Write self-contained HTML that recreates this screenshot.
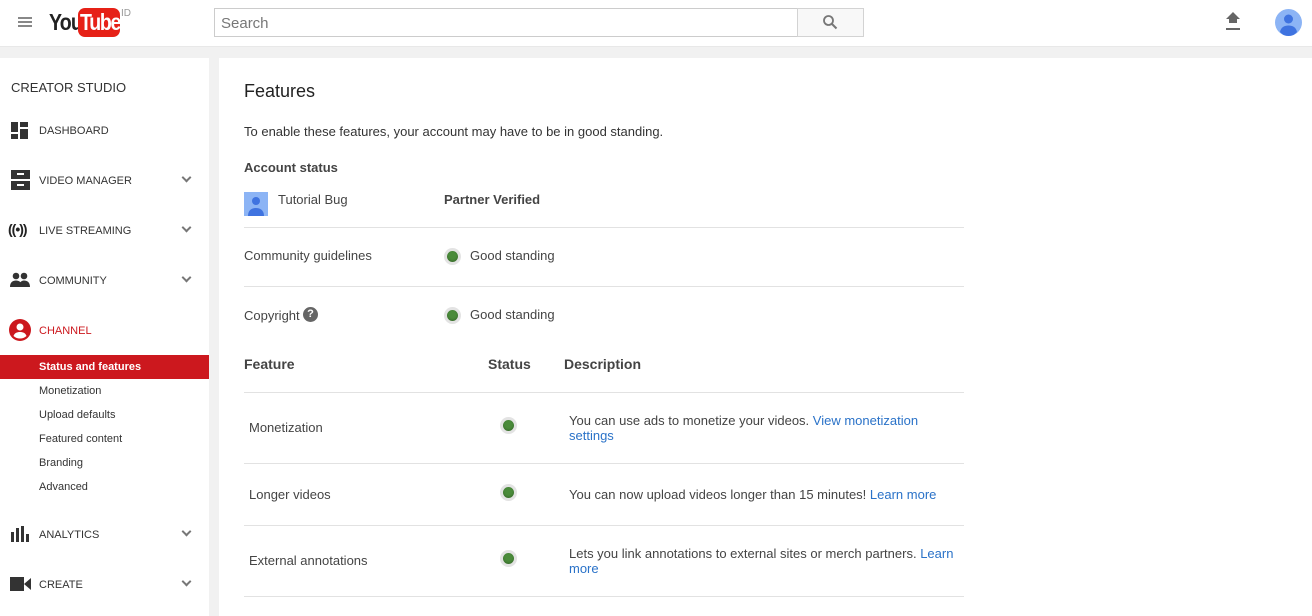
<!DOCTYPE html>
<html><head><style>
*{margin:0;padding:0;box-sizing:border-box}
body{width:1312px;height:616px;overflow:hidden;font-family:"Liberation Sans",Arial,sans-serif;background:#f1f1f1;position:relative;color:#333}
.a{position:absolute;white-space:nowrap}
#hdr{position:absolute;left:0;top:0;width:1312px;height:47px;background:#fff;border-bottom:1px solid #e8e8e8}
#side{position:absolute;left:0;top:58px;width:209px;height:558px;background:#fff}
#main{position:absolute;left:219px;top:58px;width:1093px;height:558px;background:#fff}
.nav{font-size:11px;color:#333;left:39px}
.sub{font-size:11px;color:#333;left:39px}
.chev{left:183px;width:7px;height:7px;border-right:2px solid #777;border-bottom:2px solid #777;transform:rotate(45deg)}
.m{font-size:13px;color:#444}
.hr{position:absolute;left:244px;width:720px;height:1px;background:#e2e2e2}
.dot{position:absolute;width:17px;height:17px;border-radius:50%;background:#4a8b3a;border:3px solid #e3e3e3;box-shadow:inset 0 -1px 2px rgba(0,0,0,.25)}
.lk{color:#2a72c8}
</style></head><body>
<div id="hdr"></div>
<div class="a" style="left:18px;top:17px;width:14px;height:2px;background:#888;box-shadow:0 4px 0 #888,0 8px 0 #888"></div>
<div class="a" style="left:49px;top:9px;font-size:23px;font-weight:bold;letter-spacing:-1px;color:#222;transform:scaleX(.85);transform-origin:left">You</div>
<div class="a" style="left:78px;top:8px;width:42px;height:29px;background:#e62117;border-radius:7px"></div>
<div class="a" style="left:80px;top:9px;font-size:23px;font-weight:bold;letter-spacing:-1.5px;color:#fff;transform:scaleX(.85);transform-origin:left">Tube</div>
<div class="a" style="left:121px;top:8px;font-size:10px;color:#999">ID</div>
<div class="a" style="left:214px;top:8px;width:584px;height:29px;border:1px solid #ccc;background:#fff;font-size:15px;color:#777;padding:6px 6px">Search</div>
<div class="a" style="left:797px;top:8px;width:67px;height:29px;border:1px solid #d3d3d3;background:#f8f8f8"></div>
<svg class="a" style="left:822px;top:14px" width="16" height="16" viewBox="0 0 16 16"><circle cx="6.5" cy="6.5" r="4.5" fill="none" stroke="#777" stroke-width="1.8"/><path d="M10 10l4.5 4.5" stroke="#777" stroke-width="2"/></svg>
<svg class="a" style="left:1224px;top:12px" width="18" height="20" viewBox="0 0 18 20"><path d="M5 11V7H2l7-7 7 7h-3v4z" fill="#666"/><rect x="2" y="16" width="14" height="2" fill="#666"/></svg>
<svg class="a" style="left:1275px;top:9px" width="27" height="27" viewBox="0 0 27 27"><circle cx="13.5" cy="13.5" r="13.5" fill="#8cb4f5"/><circle cx="13.5" cy="10" r="4.5" fill="#3f73e0"/><path d="M5 23c1-5 4.5-6.5 8.5-6.5s7.5 1.5 8.5 6.5c-2 2.5-5 4-8.5 4s-6.5-1.5-8.5-4z" fill="#3f73e0"/></svg>

<div id="side"></div>
<div id="main"></div>
<div class="a" style="left:11px;top:80px;font-size:13px;color:#333">CREATOR STUDIO</div>
<svg class="a" style="left:11px;top:122px" width="17" height="17"><rect x="0" y="0" width="7" height="10" fill="#333"/><rect x="0" y="12" width="7" height="5" fill="#333"/><rect x="9" y="0" width="8" height="5" fill="#333"/><rect x="9" y="7" width="8" height="10" fill="#333"/></svg>
<div class="a nav" style="top:125px">DASHBOARD</div>
<svg class="a" style="left:11px;top:170px" width="19" height="20"><rect x="0" y="0" width="19" height="9" fill="#333"/><rect x="0" y="11" width="19" height="9" fill="#333"/><rect x="6" y="3" width="7" height="2" fill="#fff"/><rect x="6" y="14" width="7" height="2" fill="#fff"/></svg>
<div class="a nav" style="top:175px">VIDEO MANAGER</div><div class="a chev" style="top:174px"></div>
<div class="a" style="left:8px;top:221px;font-size:14px;font-weight:bold;color:#222;letter-spacing:-1px">((•))</div>
<div class="a nav" style="top:225px">LIVE STREAMING</div><div class="a chev" style="top:224px"></div>
<svg class="a" style="left:10px;top:272px" width="21" height="16"><circle cx="6" cy="4" r="3.3" fill="#333"/><circle cx="14" cy="4" r="3.3" fill="#333"/><path d="M0 15c0-5 3-6.5 6-6.5s6 1.5 6 6.5z M9 15c0-4 2-6.5 5-6.5s6 1.5 6 6.5z" fill="#333"/></svg>
<div class="a nav" style="top:275px">COMMUNITY</div><div class="a chev" style="top:274px"></div>
<svg class="a" style="left:9px;top:319px" width="22" height="22"><circle cx="11" cy="11" r="11" fill="#cc181e"/><circle cx="11" cy="8" r="3.5" fill="#fff"/><path d="M4.5 17c1-3 3.5-4 6.5-4s5.5 1 6.5 4c-1.5 1.5-4 2.5-6.5 2.5s-5-1-6.5-2.5z" fill="#fff"/></svg>
<div class="a nav" style="top:325px;color:#cc181e">CHANNEL</div>
<div class="a" style="left:0;top:355px;width:209px;height:24px;background:#cc181e"></div>
<div class="a sub" style="top:361px;color:#fff;font-weight:bold">Status and features</div>
<div class="a sub" style="top:385px">Monetization</div>
<div class="a sub" style="top:409px">Upload defaults</div>
<div class="a sub" style="top:433px">Featured content</div>
<div class="a sub" style="top:457px">Branding</div>
<div class="a sub" style="top:481px">Advanced</div>
<svg class="a" style="left:11px;top:526px" width="18" height="16"><rect x="0" y="6" width="3" height="10" fill="#333"/><rect x="5" y="2" width="3" height="14" fill="#333"/><rect x="10" y="0" width="3" height="16" fill="#333"/><rect x="15" y="8" width="3" height="8" fill="#333"/></svg>
<div class="a nav" style="top:529px">ANALYTICS</div><div class="a chev" style="top:528px"></div>
<svg class="a" style="left:10px;top:577px" width="21" height="14"><rect x="0" y="0" width="14" height="14" fill="#333"/><path d="M14 7l7-6v12z" fill="#333"/></svg>
<div class="a nav" style="top:579px">CREATE</div><div class="a chev" style="top:578px"></div>

<div class="a" style="left:244px;top:81px;font-size:18px;color:#222">Features</div>
<div class="a m" style="left:244px;top:124px;color:#333">To enable these features, your account may have to be in good standing.</div>
<div class="a" style="left:244px;top:160px;font-size:13px;font-weight:bold;color:#444">Account status</div>
<svg class="a" style="left:244px;top:192px" width="24" height="24"><rect width="24" height="24" fill="#8cb4f5"/><circle cx="12" cy="9" r="4" fill="#3f73e0"/><path d="M4 24c0-6 4-8 8-8s8 2 8 8z" fill="#3f73e0"/></svg>
<div class="a m" style="left:278px;top:192px">Tutorial Bug</div>
<div class="a" style="left:444px;top:192px;font-size:13px;font-weight:bold;color:#444">Partner Verified</div>
<div class="hr" style="top:227px"></div>
<div class="a m" style="left:244px;top:248px">Community guidelines</div>
<div class="dot" style="left:444px;top:248px"></div>
<div class="a m" style="left:470px;top:248px">Good standing</div>
<div class="hr" style="top:286px"></div>
<div class="a m" style="left:244px;top:308px">Copyright</div>
<div class="a" style="left:303px;top:307px;width:15px;height:15px;border-radius:50%;background:#666;color:#fff;font-size:11px;font-weight:bold;text-align:center;line-height:15px">?</div>
<div class="dot" style="left:444px;top:307px"></div>
<div class="a m" style="left:470px;top:307px">Good standing</div>
<div class="a" style="left:244px;top:356px;font-size:14px;font-weight:bold;color:#444">Feature</div>
<div class="a" style="left:488px;top:356px;font-size:14px;font-weight:bold;color:#444">Status</div>
<div class="a" style="left:564px;top:356px;font-size:14px;font-weight:bold;color:#444">Description</div>
<div class="hr" style="top:392px"></div>
<div class="a m" style="left:249px;top:420px">Monetization</div>
<div class="dot" style="left:500px;top:417px"></div>
<div class="a m" style="left:569px;top:413px;line-height:15px">You can use ads to monetize your videos. <span class="lk">View monetization<br>settings</span></div>
<div class="hr" style="top:463px"></div>
<div class="a m" style="left:249px;top:487px">Longer videos</div>
<div class="dot" style="left:500px;top:484px"></div>
<div class="a m" style="left:569px;top:487px">You can now upload videos longer than 15 minutes! <span class="lk">Learn more</span></div>
<div class="hr" style="top:525px"></div>
<div class="a m" style="left:249px;top:553px">External annotations</div>
<div class="dot" style="left:500px;top:550px"></div>
<div class="a m" style="left:569px;top:546px;line-height:15px">Lets you link annotations to external sites or merch partners. <span class="lk">Learn<br>more</span></div>
<div class="hr" style="top:596px"></div>
</body></html>
